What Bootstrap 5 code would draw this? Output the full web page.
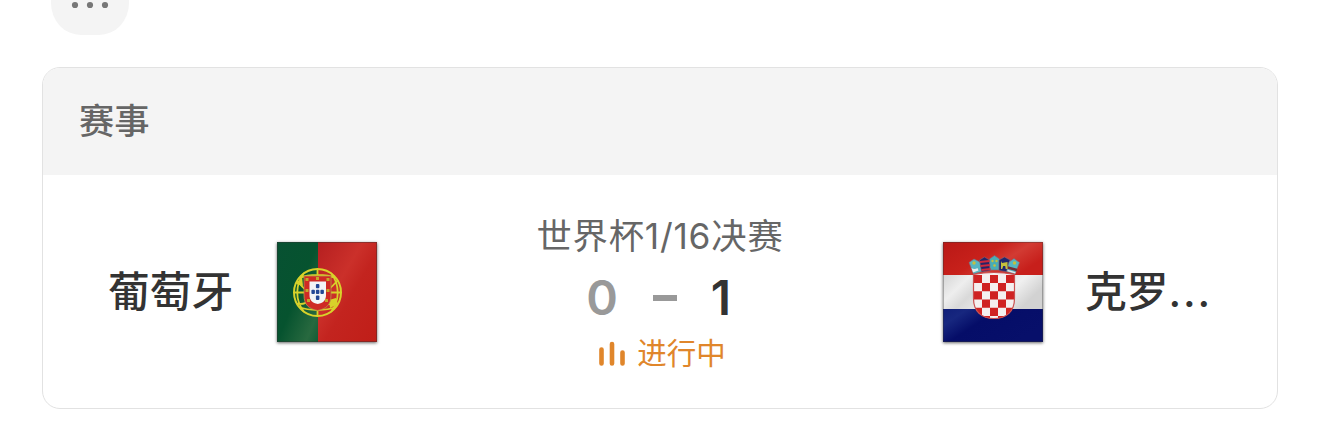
<!DOCTYPE html>
<html lang="zh-CN">
<head>
  <meta charset="UTF-8" />
  <title>赛事</title>
  <meta name="viewport" content="width=device-width, initial-scale=1" />
  <link href="https://cdn.jsdelivr.net/npm/bootstrap@5.3.0/dist/css/bootstrap.min.css" rel="stylesheet" />
  <style>
    body {
      font-family: Inter, "Noto Sans CJK SC", sans-serif;
      color: #333;
      overflow: hidden;
    }
    .page { padding: 0 42px; }
    .more-btn {
      width: 78px;
      height: 35px;
      margin-left: 9px;
      padding-bottom: 26px;
      background: #f4f4f4;
      border: 0;
      border-radius: 0 0 30px 30px / 0 0 32px 32px;
    }
    .more-btn svg { flex: none; }
    .match-card {
      height: 342px;
      margin-top: 32px;
      border: 1px solid #e2e2e2;
      border-radius: 18px;
      overflow: hidden;
    }
    .match-head {
      height: 107px;
      padding: 0 36px;
      background: #f4f4f4;
      border: 0;
      color: #666;
      font-size: 35.3px;
      font-weight: 500;
      line-height: 50px;
    }
    .match-body { padding: 0 65px; }
    .team { width: 269px; }
    .team-name {
      font-size: 41.8px;
      font-weight: 500;
      line-height: 60px;
      white-space: nowrap;
    }
    .team-name .dots { letter-spacing: 1.8px; }
    .flag {
      flex: none;
      width: 100px;
      height: 100px;
      box-shadow: 0 1px 3px rgba(0, 0, 0, .6);
    }
    .stage { font-size: 35.3px; line-height: 48px; letter-spacing: .8px; color: #666; white-space: nowrap; }
    .score { height: 74px; padding-left: 3px; font-size: 48px; font-weight: 600; line-height: 74px; }
    .score span { width: 60px; }
    .score .losing { color: #999; }
    .score-dash { width: 24px; height: 6px; margin: 1px 14px 0 21px; background: #999; }
    .live { gap: 11px; height: 36px; padding-left: 4px; color: #e0862b; font-size: 29.5px; line-height: 36px; }
  </style>
</head>
<body>
  <div class="page">
    <button type="button" class="more-btn d-flex align-items-center justify-content-center" aria-label="更多">
      <svg width="38" height="8" viewBox="0 0 38 8" fill="#777">
        <circle cx="4" cy="4" r="3.1" /><circle cx="19" cy="4" r="3.1" /><circle cx="34" cy="4" r="3.1" />
      </svg>
    </button>

    <div class="card match-card">
      <div class="card-header match-head d-flex align-items-center">赛事</div>
      <div class="card-body match-body d-flex align-items-center justify-content-between">
        <!-- Portugal -->
        <div class="team d-flex align-items-center justify-content-between">
          <div class="team-name">葡萄牙</div>
          <svg class="flag" viewBox="0 0 100 100">
            <defs>
              <linearGradient id="ptGreen" x1="0" y1="0" x2="1" y2="1">
                <stop offset="0" stop-color="#075132" /><stop offset=".5" stop-color="#06532f" />
                <stop offset=".85" stop-color="#28693f" /><stop offset="1" stop-color="#125c35" />
              </linearGradient>
              <linearGradient id="ptRed" x1="0" y1="0" x2="1" y2="1">
                <stop offset="0" stop-color="#b51f20" /><stop offset=".38" stop-color="#cb302a" />
                <stop offset=".55" stop-color="#c3241f" /><stop offset="1" stop-color="#c01e18" />
              </linearGradient>
            </defs>
            <rect width="41" height="100" fill="url(#ptGreen)" />
            <rect x="41" width="59" height="100" fill="url(#ptRed)" />
            <g fill="none" stroke="#d8d22a" stroke-width="1.8">
              <circle cx="40.5" cy="50.5" r="23.5" stroke-width="2" />
              <path d="M40.5 27v47M17 50.5h47M20 39c12 14 29 25 41 24M20 62c12 1 29-10 41-24M27 31c-9 12-9 27 0 39M54 31c9 12 9 27 0 39M22 36c10-4 27-4 37 0M22 65c10 4 27 4 37 0" />
            </g>
            <path d="M19 42l6-8 1 10zM61 62l-8 4-1-8 7-2z" fill="#d8d22a" />
            <path d="M27 34h27v19c0 10-5 14-13.5 15.5C32 67 27 63 27 53z" fill="#cf2a24" stroke="#b9954a" stroke-width=".8" />
            <path d="M32.500 39.500h16.500v13.500c0 5.500-3 8-8.250 9C35.500 61 32.500 58.500 32.500 53z" fill="#f3f4f6" />
            <g fill="#234795">
              <rect x="38.9" y="42" width="3.5" height="4.3" rx="1" />
              <rect x="34.4" y="47.8" width="3.5" height="4.3" rx="1" />
              <rect x="38.9" y="47.8" width="3.5" height="4.3" rx="1" />
              <rect x="43.4" y="47.8" width="3.5" height="4.3" rx="1" />
              <rect x="38.9" y="53.6" width="3.5" height="4.3" rx="1" />
            </g>
            <g fill="#c7a529">
              <rect x="28.5" y="36" width="3" height="3" /><rect x="39" y="35" width="3" height="3" />
              <rect x="49.5" y="36" width="3" height="3" /><rect x="28.5" y="47" width="3" height="3" />
              <rect x="49.5" y="47" width="3" height="3" /><rect x="30" y="57" width="3" height="3" />
              <rect x="48" y="57" width="3" height="3" />
            </g>
            <rect x=".5" y=".5" width="99" height="99" fill="none" stroke="#333" stroke-opacity=".4" />
          </svg>
        </div>

        <div class="text-center">
          <div class="stage">世界杯1/16决赛</div>
          <div class="score d-flex align-items-center justify-content-center">
            <span class="losing">0</span>
            <div class="score-dash"></div>
            <span>1</span>
          </div>
          <div class="live d-flex align-items-center justify-content-center">
            <svg width="28" height="28" viewBox="0 0 28 28" fill="none" stroke="currentColor" stroke-width="4.6" stroke-linecap="round">
              <path d="M3.500 10.500v14M14 5v19.500M24.500 13.500v11" />
            </svg>
            <span>进行中</span>
          </div>
        </div>

        <!-- Croatia -->
        <div class="team d-flex align-items-center justify-content-between">
          <svg class="flag" viewBox="0 0 100 100">
            <defs>
              <linearGradient id="hrRed" x1="0" y1="0" x2="1" y2=".5">
                <stop offset="0" stop-color="#b91816" /><stop offset=".5" stop-color="#c8211b" />
                <stop offset=".72" stop-color="#d23b33" /><stop offset="1" stop-color="#c71f1b" />
              </linearGradient>
              <linearGradient id="hrWhite" x1="0" y1="0" x2="1" y2=".35">
                <stop offset="0" stop-color="#d5d5d5" /><stop offset=".25" stop-color="#eeeeee" />
                <stop offset=".42" stop-color="#d9d9d9" /><stop offset=".75" stop-color="#f0f0f0" />
                <stop offset="1" stop-color="#d2d2d2" />
              </linearGradient>
              <linearGradient id="hrBlue" x1="0" y1="0" x2="1" y2=".5">
                <stop offset="0" stop-color="#101f79" /><stop offset=".2" stop-color="#17277f" />
                <stop offset=".45" stop-color="#050d68" /><stop offset="1" stop-color="#070f6a" />
              </linearGradient>
              <clipPath id="hrShield"><path d="M30.500 32.500q20.500-4 41 0v24c0 13-8 20-20.500 20s-20.500-7-20.500-20z" /></clipPath>
            </defs>
            <rect width="100" height="33" fill="url(#hrRed)" />
            <rect y="33" width="100" height="34" fill="url(#hrWhite)" />
            <rect y="67" width="100" height="33" fill="url(#hrBlue)" />
            <g stroke="#8a6570" stroke-width=".6">
              <path d="M26 20.500l5-3.500 6 3 2 9.500-8.500 2.500z" fill="#56b5c2" />
              <path d="M36.500 18l5-3 5 3 1 10.500-9 1.500z" fill="#262367" />
              <path d="M46.500 17l5-3.500 5 3.500-.5 11h-9z" fill="#48adb6" />
              <path d="M56 18l5.500-3 5.500 3-2 12-9-1.500z" fill="#20266e" />
              <path d="M66 20l5-3.500 5.500 4-4.500 11.500-8.500-2.500z" fill="#56b5c2" />
            </g>
            <path d="M37 20l9.500-1M37.500 24l9.500-1M38.500 28l9-1" stroke="#cf293c" stroke-width="2" />
            <path d="M64.500 25.500l9.500 2.500" stroke="#722c36" stroke-width="2.5" />
            <path d="M64.500 28.500l8 2.300" stroke="#ece4e5" stroke-width="1.4" />
            <g fill="#c5c03c">
              <circle cx="31" cy="21" r="1.7" /><circle cx="49.5" cy="19" r="1.2" /><circle cx="53.5" cy="19" r="1.2" />
              <circle cx="51.5" cy="23.5" r="1.3" /><circle cx="71.500" cy="21" r="1.7" />
              <path d="M58 19l1 2 5.500-1v7h-1.800l-.5-3h-2l-1 3h-1.200z" />
            </g>
            <path d="M28.500 26q3 2 6 0l1 2.500-5.500 2z" fill="#e8eef0" />
            <g clip-path="url(#hrShield)">
              <rect x="30" y="29" width="42" height="49" fill="#f4efef" />
              <path d="M31 37h40M31 53.400h40M31 69.800h40M39 45.200h32M39 61.600h32M39 78h32" stroke="#cf2222" stroke-width="8.2" stroke-dasharray="8" />
            </g>
            <path d="M30.500 32.500q20.500-4 41 0v24c0 13-8 20-20.500 20s-20.500-7-20.500-20z" fill="none" stroke="#cb5050" stroke-width="1.2" />
            <rect x=".5" y=".5" width="99" height="99" fill="none" stroke="#333" stroke-opacity=".35" />
          </svg>
          <div class="team-name">克罗<span class="dots">...</span></div>
        </div>
      </div>
    </div>
  </div>
  <script src="https://cdn.jsdelivr.net/npm/bootstrap@5.3.0/dist/js/bootstrap.bundle.min.js"></script>
</body>
</html>
